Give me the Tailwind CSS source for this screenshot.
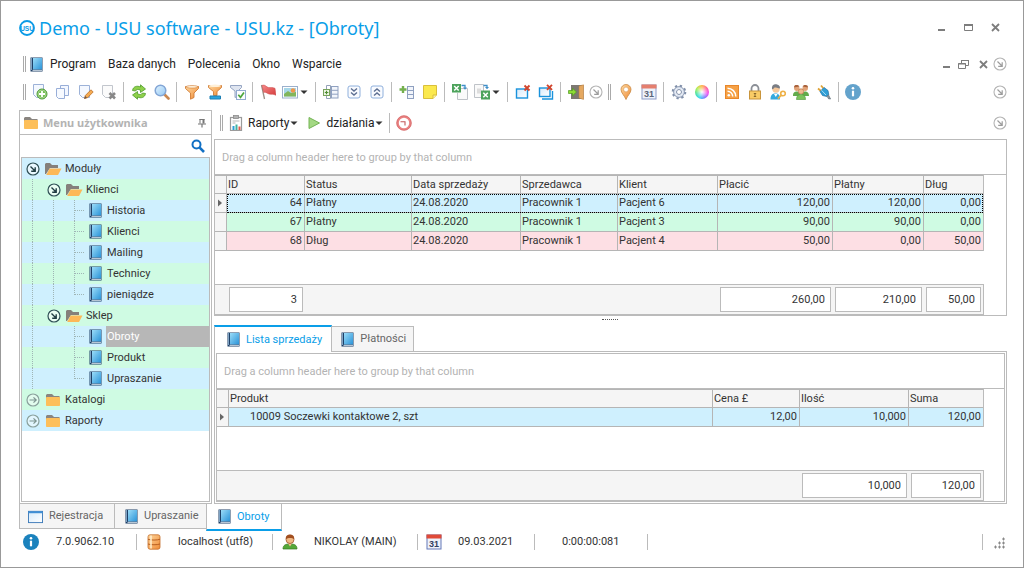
<!DOCTYPE html>
<html lang="pl">
<head>
<meta charset="utf-8">
<meta name="viewport" content="width=device-width, initial-scale=1">
<title>Demo - USU software - USU.kz - [Obroty]</title>
<script src="https://cdn.jsdelivr.net/npm/@tailwindcss/browser@4"></script>
</head>
<body class="bg-white font-[Roboto,'Noto_Sans',sans-serif] text-[11px] leading-4 text-[#333]">

<!-- Shared icon shapes -->
<svg class="absolute size-0" aria-hidden="true">
  <defs>
    <linearGradient id="gBook" x1="0" y1="0" x2="1" y2="1"><stop offset="0" stop-color="#9bdcf8"/><stop offset="1" stop-color="#2a93d8"/></linearGradient>
    <linearGradient id="gOrange" x1="0" y1="0" x2="1" y2="1"><stop offset="0" stop-color="#ffd9a0"/><stop offset="1" stop-color="#ef8a35"/></linearGradient>
    <linearGradient id="gLens" x1="0" y1="0" x2="1" y2="1"><stop offset="0" stop-color="#e2f3ff"/><stop offset="1" stop-color="#93c8f3"/></linearGradient>
    <linearGradient id="gRed" x1="0" y1="0" x2="1" y2="1"><stop offset="0" stop-color="#f58a8a"/><stop offset="1" stop-color="#d63c3c"/></linearGradient>
    <linearGradient id="gWin" x1="0" y1="0" x2="1" y2="1"><stop offset="0" stop-color="#d5eafb"/><stop offset="1" stop-color="#fff"/></linearGradient>
  </defs>
  <symbol id="book" viewBox="0 0 13 15"><rect x=".5" y=".5" width="12" height="14" fill="#1d3f66"/><rect x="1" y="1" width="1" height="12" fill="#7fa3c4"/><rect x="3" y="1" width="9" height="11.5" fill="url(#gBook)"/><path d="M2.500 13.300H12" stroke="#dfe9f2" stroke-width="1"/></symbol>
  <symbol id="folder" viewBox="0 0 16 14"><path d="M1 3V2l1-1h5l2 2h5.500v3H1z" fill="#8a8580"/><rect x="1" y="4" width="14" height="9" rx=".8" fill="#fdbf5a"/></symbol>
  <symbol id="folderOpen" viewBox="0 0 17 14"><path d="M0 2l1-1h4l2 2h6v3H5L1 12H0z" fill="#85807b"/><path d="M4.600 6.500H16.500L13 13H1.200z" fill="#fdb858"/></symbol>
  <symbol id="openNode" viewBox="0 0 14 14"><circle cx="7" cy="7" r="6" fill="#fff" fill-opacity=".55" stroke="#2f4f55" stroke-width="1.200"/><path d="M4.500 4.500l4.500 4.500M9.200 5.300v4H5.200" fill="none" stroke="#203c42" stroke-width="1.400"/></symbol>
  <symbol id="closedNode" viewBox="0 0 14 14"><circle cx="7" cy="7" r="6" fill="#fff" fill-opacity=".4" stroke="#8aa09c" stroke-width="1.200"/><path d="M3.500 7h6.500M7.500 4.300L10.200 7 7.500 9.700" fill="none" stroke="#7d9490" stroke-width="1.200"/></symbol>
  <symbol id="more" viewBox="0 0 14 14"><circle cx="7" cy="7" r="6" fill="none" stroke="#b4b4b4" stroke-width="1.100"/><path d="M4.500 4.500l4.500 4.500M9.200 5.300v4H5.200" fill="none" stroke="#9c9c9c" stroke-width="1.200"/></symbol>
  <symbol id="gv" viewBox="0 0 21 21"><path d="M10.500 0V21" stroke="#9fb5b5" stroke-dasharray="1 1"/></symbol>
  <symbol id="gt" viewBox="0 0 21 21"><path d="M10.500 0V21M11 10.500H20" stroke="#9fb5b5" stroke-dasharray="1 1"/></symbol>
  <symbol id="ge" viewBox="0 0 21 21"><path d="M10.500 0V11M11 10.500H20" stroke="#9fb5b5" stroke-dasharray="1 1"/></symbol>
  <symbol id="new" viewBox="0 0 16 16"><path d="M1.500 .5h10v13h-7l-3-3z" fill="#f4f8ff" stroke="#9db2d8"/><circle cx="10" cy="10" r="5" fill="#74bd54" stroke="#4f9a3a"/><circle cx="10" cy="10" r="4" fill="none" stroke="#b9e0a2" stroke-width=".7"/><path d="M10 7v6M7 10h6" stroke="#fff" stroke-width="1.800"/></symbol>
  <symbol id="copy" viewBox="0 0 16 16"><path d="M5.500 1.500h8v10h-8z" fill="#f3f7ff" stroke="#98aed8"/><path d="M1.500 4.500h8v10h-6l-2-2z" fill="#f7faff" stroke="#98aed8"/></symbol>
  <symbol id="edit" viewBox="0 0 16 16"><path d="M1.500 1.500h10v12h-7l-3-3z" fill="#f4f8ff" stroke="#9db2d8"/><path d="M6.500 14.500l.8-3L13 5.800l2.200 2.200-5.700 5.700z" fill="#f5ab52" stroke="#b96f2a" stroke-width=".8"/><path d="M6.200 15l1-3 1.800 1.800z" fill="#6c5848"/></symbol>
  <symbol id="del" viewBox="0 0 16 16"><path d="M1.500 1.500h10v12h-7l-3-3z" fill="#fbfbfb" stroke="#c2c6cd"/><path d="M8.500 9l5.500 5.500M14 9l-5.500 5.500" stroke="#888" stroke-width="2.600"/></symbol>
  <symbol id="refresh" viewBox="0 0 16 16"><path d="M1.500 6.500C2 2.500 6 1.300 9.500 3V.8L14.500 5 9.500 8.500V6.200C7 5 5.300 5.300 4.500 7z" fill="#8ed04a" stroke="#4d9a2a" stroke-width=".8"/><path d="M14.500 9.500c-.5 4-4.500 5.200-8 3.500v2.200L1.500 11l5-3.500v2.300c2.500 1.200 4.200.9 5-.8z" fill="#8ed04a" stroke="#4d9a2a" stroke-width=".8"/></symbol>
  <symbol id="find" viewBox="0 0 16 16"><path d="M10.500 10.500l4 4" stroke="#c98852" stroke-width="2.600" stroke-linecap="round"/><circle cx="6.500" cy="6.500" r="5.300" fill="url(#gLens)" stroke="#83a6d6" stroke-width="1.500"/></symbol>
  <symbol id="funnel" viewBox="0 0 16 16"><path d="M1.500 2.500h13v2L10 9v4.500l-3.500 1.700V9L1.500 4.500z" fill="url(#gOrange)" stroke="#d07c35" stroke-width=".9"/><ellipse cx="8" cy="2.800" rx="6" ry="1.300" fill="#fff0d8" stroke="#d07c35" stroke-width=".6"/></symbol>
  <symbol id="funnelBar" viewBox="0 0 16 16"><path d="M1.500 1.500h13v2L10 7.500v4H6.500v-4L1.500 3.500z" fill="url(#gOrange)" stroke="#d07c35" stroke-width=".9"/><ellipse cx="8" cy="1.800" rx="6" ry="1.200" fill="#fff0d8"/><path d="M3 12h10.500v3H3z" fill="#28a4dd" stroke="#1c7fb4"/></symbol>
  <symbol id="funnelOk" viewBox="0 0 16 16"><path d="M.5 1.500h11v2L8 7v5l-3 1.500V7L.5 3.500z" fill="#dfe5f0" stroke="#8b9cbc" stroke-width=".9"/><rect x="6.500" y="6.500" width="9" height="9" fill="#fbfdff" stroke="#93abd0"/><path d="M8.300 10.800l2.200 2.500 3.500-4.800" fill="none" stroke="#4da63c" stroke-width="1.700"/></symbol>
  <symbol id="flag" viewBox="0 0 16 16"><path d="M1.500 1l3 14" stroke="#9c8f86" stroke-width="1.300"/><path d="M2 1.500c3-1.500 4 1.500 6.500 2s3-.8 6.500.8l1 7c-3-1.700-4.500-.5-7-1.300S5.700 7.500 3.700 8.500z" fill="url(#gRed)" stroke="#c94a4a" stroke-width=".5"/></symbol>
  <symbol id="image" viewBox="0 0 16 16"><rect x=".5" y="2.500" width="15" height="11.500" fill="#fff" stroke="#9bb0cc"/><rect x="2" y="4" width="12" height="8.500" fill="#a7d7e8"/><path d="M2 10l4-3 3 2 5-1v4.500H2z" fill="#82b65c"/><circle cx="11" cy="6.500" r="2.300" fill="#f0974a"/></symbol>
  <symbol id="caret" viewBox="0 0 8 8"><path d="M.5 2.500h7L4 6z" fill="#333"/></symbol>
  <symbol id="expandCols" viewBox="0 0 16 16"><path d="M3.500 6V1.500h4v13h-4V11" fill="none" stroke="#93a1b8"/><rect x="8.500" y="2.500" width="6.500" height="11.500" fill="#f2f5fb" stroke="#8fa0c0"/><path d="M8.500 6.300H15M8.500 10.200H15" stroke="#8fa0c0"/><rect x=".5" y="5.500" width="6" height="6" fill="#eef6e6" stroke="#78a35e"/><path d="M3.500 6.800v3.500M1.800 8.500h3.500" stroke="#4f8d32" stroke-width="1.200"/></symbol>
  <symbol id="chevDown" viewBox="0 0 16 16"><rect x="2" y="2" width="12" height="12" rx="2" fill="#f9fbff" stroke="#8fb0dc"/><path d="M5 4.500l3 2.500 3-2.500M5 8.500l3 2.500 3-2.500" fill="none" stroke="#5d6f92" stroke-width="1.400"/></symbol>
  <symbol id="chevUp" viewBox="0 0 16 16"><rect x="2" y="2" width="12" height="12" rx="2" fill="#f9fbff" stroke="#8fb0dc"/><path d="M5 7.500L8 5l3 2.500M5 11.500L8 9l3 2.500" fill="none" stroke="#5d6f92" stroke-width="1.400"/></symbol>
  <symbol id="addCol" viewBox="0 0 16 16"><path d="M4 2v7M.5 5.500h7" stroke="#74b04e" stroke-width="2.400"/><rect x="8.500" y="2.500" width="6" height="12" fill="#f2f5fb" stroke="#8fa0c0"/><path d="M8.500 6.500h6M8.500 10.500h6" stroke="#8fa0c0"/></symbol>
  <symbol id="note" viewBox="0 0 16 16"><path d="M1.500 1.500h13v9.500l-3.500 3.500h-9.500z" fill="#fbe94e" stroke="#d9bf3c"/><path d="M14.500 11H11v3.500" fill="#fff6a5" stroke="#d9bf3c"/></symbol>
  <symbol id="xlsIn" viewBox="0 0 16 16"><path d="M9 4.500H15.500V15.500H5.500V9" fill="#fafafa" stroke="#bfc3c8"/><rect x="0" y="0" width="9" height="8.500" fill="#4da35c"/><path d="M2.200 2l4.500 4.500M6.700 2L2.200 6.500" stroke="#fff" stroke-width="1.500"/><path d="M9.500 1.500H13V4" fill="none" stroke="#3f8fc9" stroke-width="1.300"/><path d="M11 3.500h4l-2 2.300z" fill="#3f8fc9"/></symbol>
  <symbol id="xlsOut" viewBox="0 0 16 16"><path d="M.5.500h9v13h-9z" fill="#fafafa" stroke="#bfc3c8"/><path d="M3 4.500h4v5H3z" fill="#ddd"/><rect x="7" y="6.500" width="9" height="9" fill="#4da35c"/><path d="M9.300 8.800l4.500 4.500M13.800 8.800l-4.500 4.500" stroke="#fff" stroke-width="1.500"/><path d="M9.500 1.500H13V4" fill="none" stroke="#3f8fc9" stroke-width="1.300"/><path d="M11 3h4l-2 2.300z" fill="#3f8fc9"/></symbol>
  <symbol id="winX" viewBox="0 0 16 16"><rect x="1.500" y="5" width="11" height="9" fill="url(#gWin)" stroke="#1992dc" stroke-width="1.400"/><path d="M9.500 1.500l5 5M14.500 1.500l-5 5" stroke="#d2452d" stroke-width="1.900"/></symbol>
  <symbol id="winsX" viewBox="0 0 16 16"><path d="M4 15h10.500V7" fill="none" stroke="#1992dc" stroke-width="1.400"/><rect x="1.500" y="4" width="10.500" height="8.500" fill="url(#gWin)" stroke="#1992dc" stroke-width="1.400"/><path d="M9 .8l5 5M14 .8l-5 5" stroke="#d2452d" stroke-width="1.900"/></symbol>
  <symbol id="door" viewBox="0 0 16 16"><path d="M3 1h12.500v14H3z" fill="#7d7872"/><path d="M11 2l4.500-1.200v14.700L11 14z" fill="#e5a860" stroke="#b97f3e" stroke-width=".5"/><path d="M.5 6.500h4V4.200L8.500 8l-4 3.800V9.500h-4z" fill="#8ddb35" stroke="#4f9a1e" stroke-width=".7"/></symbol>
  <symbol id="pin" viewBox="0 0 16 16"><path d="M8 15.500C6.500 11.500 3 9 3 5.500a5 5 0 0110 0C13 9 9.500 11.500 8 15.500z" fill="url(#gOrange)" stroke="#c98a45" stroke-width=".8"/><circle cx="8" cy="5.500" r="2.400" fill="#fff" stroke="#d59a58" stroke-width=".6"/></symbol>
  <symbol id="gear" viewBox="0 0 16 16"><circle cx="8" cy="8" r="6.300" fill="none" stroke="#8190aa" stroke-width="2" stroke-dasharray="2.300 2.650"/><circle cx="8" cy="8" r="4.300" fill="#fff" stroke="#dfe6f2" stroke-width="2"/><circle cx="8" cy="8" r="5.400" fill="none" stroke="#8190aa" stroke-width=".9"/><circle cx="8" cy="8" r="2.500" fill="#fff" stroke="#8190aa"/></symbol>
  <symbol id="rss" viewBox="0 0 16 16"><rect x="1.500" y="1.500" width="13" height="13" fill="#f6a145" stroke="#e8872a"/><circle cx="4.800" cy="11.300" r="1.300" fill="#fff"/><path d="M3.500 7.300a5.200 5.200 0 015.200 5.200M3.500 4.200a8.300 8.300 0 018.300 8.300" fill="none" stroke="#fff" stroke-width="1.500"/></symbol>
  <symbol id="lock" viewBox="0 0 16 16"><path d="M4.500 8V4.500a3.500 3.500 0 017 0V8" fill="none" stroke="#8b8f96" stroke-width="1.800"/><rect x="2.500" y="7" width="11" height="8" fill="#f9cc66" stroke="#c9953c"/><path d="M8 9.500v3M6.800 9.500h2.400M6.800 12.500h2.400" stroke="#8a6a2e"/></symbol>
  <symbol id="userKey" viewBox="0 0 16 16"><path d="M.5 15.500c0-5 2-6 5-6s4.500 1.500 4.500 6z" fill="#35a9dd"/><path d="M4 10l1.800 3L7.500 10z" fill="#fff"/><circle cx="6" cy="5" r="3.700" fill="#f6c89a"/><path d="M2 5C1.500.5 5 0 7 .5s3.500 2 2.800 4C8 4 6 3.500 4.500 3.500 3.500 5 2.800 5.500 2 5z" fill="#7a7d84"/><circle cx="13" cy="9.500" r="2.300" fill="none" stroke="#eeb045" stroke-width="1.600"/><path d="M11.500 11l-3.500 3.700" stroke="#eeb045" stroke-width="1.700"/></symbol>
  <symbol id="users" viewBox="0 0 16 16"><circle cx="3.800" cy="4.300" r="2.700" fill="#e2a377"/><circle cx="12.200" cy="4.300" r="2.700" fill="#e2a377"/><path d="M1 3.500C1 1 3 1 4 1s2 .5 2.400 1.500zM15 3.500C15 1 13 1 12 1s-2 .5-2.400 1.500z" fill="#a8623c"/><path d="M0 12c0-3.500 1.500-4.500 4-4.500S7 9 7 12zM9 12c0-3 1-4.500 3-4.500s4 1 4 4.500z" fill="#62ab4c"/><circle cx="8" cy="7.500" r="2.700" fill="#f0bc90" stroke="#b5744b" stroke-width=".7"/><path d="M3.500 15.500c0-3.500 1.500-5 4.500-5s4.500 1.500 4.500 5z" fill="#7cc35d" stroke="#4d9438" stroke-width=".6"/></symbol>
  <symbol id="plug" viewBox="0 0 16 16"><path d="M2 4.500l3 2.500M5 1.500l2.500 3" stroke="#dfa338" stroke-width="1.800"/><path d="M4 7.500L8 3.500l4 3 .8 4.300-2 1.700-4.300-1z" fill="#2f9fd6" stroke="#1b6fa3" stroke-width=".7"/><path d="M5.500 6.300l4.500 4.700" stroke="#a8dcf5"/><path d="M10.500 12.500l2-1.500 2 4-2.500-.5" fill="#8a97a0" stroke="#66747e" stroke-width=".8"/></symbol>
  <symbol id="info" viewBox="0 0 16 16"><circle cx="8" cy="8" r="8" fill="currentColor"/><circle cx="8" cy="4.300" r="1.300" fill="#fff"/><path d="M8 6.700v5.600" fill="none" stroke="#fff" stroke-width="2.200"/></symbol>
  <symbol id="report" viewBox="0 0 16 16"><rect x="2.500" y="2.500" width="11" height="13" fill="#fff" stroke="#9b9b9b" stroke-width="1.200"/><rect x="5.500" y=".5" width="5" height="3" fill="#b3b3b3" stroke="#8c8c8c" stroke-width=".8"/><path d="M4.500 6h7M4.500 8h3" stroke="#b5b5b5"/><path d="M5.500 15v-4" stroke="#2f9fd6" stroke-width="2"/><path d="M8.500 15V9.500" stroke="#41b3a0" stroke-width="2"/><path d="M11.500 15v-3.500" stroke="#e05a4c" stroke-width="2"/></symbol>
  <symbol id="play" viewBox="0 0 16 16"><path d="M3 2.500L13.500 8 3 13.500z" fill="#a3d883" stroke="#74b455"/></symbol>
  <symbol id="clock" viewBox="0 0 16 16"><circle cx="8" cy="8" r="6.400" fill="#fff" stroke="#e98282" stroke-width="2.400"/><circle cx="8" cy="8" r="7.300" fill="none" stroke="#cf6060" stroke-width=".6"/><path d="M4.500 6.800H9V10.500" fill="none" stroke="#c25a5a" stroke-width="1.100"/></symbol>
  <symbol id="thumbtack" viewBox="0 0 10 10"><path d="M2.500 1.500h5M3 1v4.500" stroke="#777"/><path d="M5.500 1h2v4.500h-2z" fill="#777"/><path d="M1 6h8M5 6v3.500" stroke="#777" stroke-width="1.200"/></symbol>
  <symbol id="glass" viewBox="0 0 14 14"><circle cx="5.500" cy="5.500" r="4" fill="none" stroke="#1170c4" stroke-width="2"/><path d="M8.700 8.700L13 13" stroke="#1170c4" stroke-width="2.600"/></symbol>
  <symbol id="win" viewBox="0 0 16 16"><rect x=".5" y="2.500" width="15" height="12" fill="url(#gWin)" stroke="#3d7ab8"/><path d="M.5 3.500h15" stroke="#3f8fd6" stroke-width="2"/></symbol>
  <symbol id="db" viewBox="0 0 16 16"><rect x="2" y=".8" width="12" height="14.400" rx="2" fill="url(#gOrange)" stroke="#c46d2a" stroke-width=".8"/><path d="M2 5.300c3 1 9 1 12 0M2 10c3 1 9 1 12 0" fill="none" stroke="#b85f20"/><path d="M5 1.500v13" stroke="#fff0d0" stroke-width="1.500"/></symbol>
  <symbol id="user" viewBox="0 0 16 16"><path d="M1 15c0-4 2.500-5 7-5s7 1 7 5z" fill="#55a838" stroke="#35781f" stroke-width=".7"/><path d="M6 9.500h4L8 12.500z" fill="#f2c08e"/><circle cx="8" cy="5.500" r="4" fill="#f0b884" stroke="#9c5529" stroke-width=".8"/><path d="M3.800 5C3.500 1.500 6 .5 8 .5s4.500 1 4.200 4.500C10 3.500 6 3.500 3.800 5z" fill="#a24f1f"/></symbol>
  <symbol id="rowMark" viewBox="0 0 6 8"><path d="M1 .5L5 4 1 7.500z" fill="#666"/></symbol>
</svg>

<div class="flex min-h-screen flex-col border border-[#999] pr-4 pb-[14px] pl-[18px]">

  <!-- Title bar -->
  <header class="flex h-[53px] shrink-0 items-center">
    <svg class="size-4 shrink-0" viewBox="0 0 16 16" aria-hidden="true"><circle cx="8" cy="8" r="7" fill="#fff" stroke="#0a9ae6" stroke-width="1.800"/><text x="8" y="10.500" text-anchor="middle" font-family="Liberation Sans, sans-serif" font-weight="700" font-size="6.500" fill="#0a9ae6">USU</text></svg>
    <h1 class="ml-1 grow font-['Noto_Sans',sans-serif] text-[18px] leading-6 text-[#0a9ee8]">Demo - USU software - USU.kz - [Obroty]</h1>
    <div class="mr-[5px] flex gap-[14px] text-[#7d7d7d]">
      <button aria-label="Minimalizuj" class="size-[13px]"><svg viewBox="0 0 13 13"><path d="M3 9h7" stroke="currentColor" stroke-width="2"/></svg></button>
      <button aria-label="Maksymalizuj" class="size-[13px]"><svg viewBox="0 0 13 13"><path d="M2.500 3.500h8v6h-8z" fill="none" stroke="currentColor"/><path d="M2 4h9" stroke="currentColor" stroke-width="2"/></svg></button>
      <button aria-label="Zamknij" class="size-[13px]"><svg viewBox="0 0 13 13"><path d="M3 3l7 7M10 3l-7 7" stroke="currentColor" stroke-width="1.800"/></svg></button>
    </div>
  </header>

  <!-- Menu bar -->
  <nav class="flex h-5 shrink-0 items-center text-[12px] text-[#222]" aria-label="Menu">
    <span class="ml-1 h-4 w-[3px] border-x border-[#aaa]"></span>
    <svg class="ml-1 h-[15px] w-[13px]"><use href="#book"/></svg>
    <button class="ml-[7px]">Program</button>
    <button class="ml-3">Baza danych</button>
    <button class="ml-3">Polecenia</button>
    <button class="ml-3">Okno</button>
    <button class="ml-3 grow text-left">Wsparcie</button>
    <div class="flex items-center text-[#7d7d7d]">
      <button aria-label="Minimalizuj okno" class="mr-1 size-[13px]"><svg viewBox="0 0 13 13"><path d="M3 9h7" stroke="currentColor" stroke-width="2"/></svg></button>
      <button aria-label="Przywróć okno" class="mr-[7px] size-[13px]"><svg viewBox="0 0 13 13"><path d="M4.500 5V2.500h7v5H9M4 2.500h8" fill="none" stroke="currentColor"/><path d="M1.500 5.500h7v5h-7zM1 6h8" fill="none" stroke="currentColor"/></svg></button>
      <button aria-label="Zamknij okno" class="mr-[3px] size-[13px]"><svg viewBox="0 0 13 13"><path d="M3 3l7 7M10 3l-7 7" stroke="currentColor" stroke-width="1.800"/></svg></button>
      <button aria-label="Więcej" class="size-[14px]"><svg class="size-full"><use href="#more"/></svg></button>
    </div>
  </nav>

  <!-- Main toolbar -->
  <div role="toolbar" aria-label="Pasek narzędzi" class="flex h-9 shrink-0 items-center">
    <span class="mr-[2px] ml-1 h-4 w-[3px] border-x border-[#aaa]"></span>
    <button aria-label="Dodaj" class="flex w-[23px] justify-center"><svg class="size-4"><use href="#new"/></svg></button>
    <button aria-label="Kopiuj" class="flex w-[23px] justify-center"><svg class="size-4"><use href="#copy"/></svg></button>
    <button aria-label="Edytuj" class="flex w-[23px] justify-center"><svg class="size-4"><use href="#edit"/></svg></button>
    <button aria-label="Usuń" class="flex w-[23px] justify-center"><svg class="size-4"><use href="#del"/></svg></button>
    <span class="mx-[3px] h-5 w-px bg-[#bbb]"></span>
    <button aria-label="Odśwież" class="flex w-[23px] justify-center"><svg class="size-4"><use href="#refresh"/></svg></button>
    <button aria-label="Szukaj" class="flex w-[23px] justify-center"><svg class="size-4"><use href="#find"/></svg></button>
    <span class="mx-[3px] h-5 w-px bg-[#bbb]"></span>
    <button aria-label="Filtr" class="flex w-[23px] justify-center"><svg class="size-4"><use href="#funnel"/></svg></button>
    <button aria-label="Wiersz filtra" class="flex w-[23px] justify-center"><svg class="size-4"><use href="#funnelBar"/></svg></button>
    <button aria-label="Filtr aktywny" class="flex w-[23px] justify-center"><svg class="size-4"><use href="#funnelOk"/></svg></button>
    <span class="mx-[3px] h-5 w-px bg-[#bbb]"></span>
    <button aria-label="Flaga" class="flex w-[23px] justify-center"><svg class="size-4"><use href="#flag"/></svg></button>
    <button aria-label="Obraz" class="flex w-[33px] items-center pl-[3px]"><svg class="size-4"><use href="#image"/></svg><svg class="ml-[2px] size-2"><use href="#caret"/></svg></button>
    <span class="mx-[3px] h-5 w-px bg-[#bbb]"></span>
    <button aria-label="Kolumny" class="flex w-[23px] justify-center"><svg class="size-4"><use href="#expandCols"/></svg></button>
    <button aria-label="Rozwiń" class="flex w-[23px] justify-center"><svg class="size-4"><use href="#chevDown"/></svg></button>
    <button aria-label="Zwiń" class="flex w-[23px] justify-center"><svg class="size-4"><use href="#chevUp"/></svg></button>
    <span class="mx-[3px] h-5 w-px bg-[#bbb]"></span>
    <button aria-label="Dodaj kolumnę" class="flex w-[23px] justify-center"><svg class="size-4"><use href="#addCol"/></svg></button>
    <button aria-label="Notatka" class="flex w-[23px] justify-center"><svg class="size-4"><use href="#note"/></svg></button>
    <span class="mx-[3px] h-5 w-px bg-[#bbb]"></span>
    <button aria-label="Import" class="flex w-[23px] justify-center"><svg class="size-4"><use href="#xlsIn"/></svg></button>
    <button aria-label="Eksport" class="flex w-[33px] items-center pl-[3px]"><svg class="size-4"><use href="#xlsOut"/></svg><svg class="ml-[2px] size-2"><use href="#caret"/></svg></button>
    <span class="mx-[3px] h-5 w-px bg-[#bbb]"></span>
    <button aria-label="Zamknij kartę" class="flex w-[23px] justify-center"><svg class="size-4"><use href="#winX"/></svg></button>
    <button aria-label="Zamknij wszystkie" class="flex w-[23px] justify-center"><svg class="size-4"><use href="#winsX"/></svg></button>
    <span class="mx-[3px] h-5 w-px bg-[#bbb]"></span>
    <button aria-label="Wyjście" class="flex w-[23px] justify-center"><svg class="size-4"><use href="#door"/></svg></button>
    <button aria-label="Więcej" class="flex w-[18px] justify-center"><svg class="size-[14px]"><use href="#more"/></svg></button>
    <span class="mx-[3px] h-4 w-[3px] border-x border-[#aaa]"></span>
    <button aria-label="Mapa" class="flex w-[23px] justify-center"><svg class="size-4"><use href="#pin"/></svg></button>
    <button aria-label="Kalendarz" class="flex w-[23px] justify-center"><svg class="size-4" viewBox="0 0 16 16"><rect x="1" y="1" width="14" height="14" fill="#eef2fa" stroke="#8c9cc8"/><rect x=".5" y=".5" width="15" height="4" fill="#e57f6e"/><text x="8" y="13" text-anchor="middle" font-family="Liberation Sans, sans-serif" font-weight="700" font-size="9" fill="#5b6578">31</text></svg></button>
    <span class="mx-[3px] h-5 w-px bg-[#bbb]"></span>
    <button aria-label="Ustawienia" class="flex w-[23px] justify-center"><svg class="size-4"><use href="#gear"/></svg></button>
    <button aria-label="Kolory" class="flex w-[23px] justify-center"><span class="size-[14px] rounded-full bg-[radial-gradient(circle,#fff_0%,transparent_65%),conic-gradient(#ffb347,#ff5d9e,#f04ef0,#7d7bff,#35d8f0,#4be39a,#b5ee4f,#ffb347)]"></span></button>
    <span class="mx-[3px] h-5 w-px bg-[#bbb]"></span>
    <button aria-label="RSS" class="flex w-[23px] justify-center"><svg class="size-4"><use href="#rss"/></svg></button>
    <button aria-label="Blokada" class="flex w-[23px] justify-center"><svg class="size-4"><use href="#lock"/></svg></button>
    <button aria-label="Prawa dostępu" class="flex w-[23px] justify-center"><svg class="size-4"><use href="#userKey"/></svg></button>
    <button aria-label="Użytkownicy" class="flex w-[23px] justify-center"><svg class="size-4"><use href="#users"/></svg></button>
    <button aria-label="Połączenie" class="flex w-[23px] justify-center"><svg class="size-4"><use href="#plug"/></svg></button>
    <span class="mx-[3px] h-5 w-px bg-[#bbb]"></span>
    <button aria-label="Informacje" class="flex w-[21px] justify-center"><svg class="size-4 text-[#64a3cc]"><use href="#info"/></svg></button>
    <button aria-label="Więcej" class="ml-auto size-[14px]"><svg class="size-full"><use href="#more"/></svg></button>
  </div>

  <div class="flex grow gap-[2px]">

    <!-- User menu -->
    <aside class="flex w-[193px] shrink-0 flex-col border border-[#bbb]">
      <div class="flex h-6 shrink-0 items-center border-b border-[#bbb] pr-1 pl-[3px]">
        <svg class="h-[14px] w-4"><use href="#folder"/></svg>
        <h2 class="ml-1 grow font-['Noto_Sans',sans-serif] text-[11px] font-bold text-[#b3b3b3]">Menu użytkownika</h2>
        <button aria-label="Przypnij" class="size-[10px]"><svg class="size-full"><use href="#thumbtack"/></svg></button>
      </div>
      <label class="flex h-[22px] shrink-0 items-center pr-[6px]">
        <input type="text" aria-label="Szukaj w menu" class="min-w-0 grow outline-none">
        <svg class="size-[14px]"><use href="#glass"/></svg>
      </label>
      <div class="mx-px mb-px grow border border-[#bbb]">
        <ul role="tree" class="[&>li]:flex [&>li]:h-[21px] [&>li]:items-center [&>li:nth-child(odd)]:bg-[#cff0fe] [&>li:nth-child(even)]:bg-[#cffbe3]">
          <li role="treeitem" aria-selected="false"><span class="flex w-[21px] justify-center"><svg class="size-[14px]"><use href="#openNode"/></svg></span><svg class="mr-[3px] ml-[2px] h-[14px] w-[17px]"><use href="#folderOpen"/></svg>Moduły</li>
          <li role="treeitem" aria-selected="false"><svg class="size-[21px]"><use href="#gv"/></svg><span class="flex w-[21px] justify-center"><svg class="size-[14px]"><use href="#openNode"/></svg></span><svg class="mr-[3px] ml-[2px] h-[14px] w-[17px]"><use href="#folderOpen"/></svg>Klienci</li>
          <li role="treeitem" aria-selected="false"><svg class="size-[21px]"><use href="#gv"/></svg><svg class="size-[21px]"><use href="#gv"/></svg><svg class="size-[21px]"><use href="#gt"/></svg><svg class="mr-[5px] ml-1 h-[15px] w-[13px]"><use href="#book"/></svg>Historia</li>
          <li role="treeitem" aria-selected="false"><svg class="size-[21px]"><use href="#gv"/></svg><svg class="size-[21px]"><use href="#gv"/></svg><svg class="size-[21px]"><use href="#gt"/></svg><svg class="mr-[5px] ml-1 h-[15px] w-[13px]"><use href="#book"/></svg>Klienci</li>
          <li role="treeitem" aria-selected="false"><svg class="size-[21px]"><use href="#gv"/></svg><svg class="size-[21px]"><use href="#gv"/></svg><svg class="size-[21px]"><use href="#gt"/></svg><svg class="mr-[5px] ml-1 h-[15px] w-[13px]"><use href="#book"/></svg>Mailing</li>
          <li role="treeitem" aria-selected="false"><svg class="size-[21px]"><use href="#gv"/></svg><svg class="size-[21px]"><use href="#gv"/></svg><svg class="size-[21px]"><use href="#gt"/></svg><svg class="mr-[5px] ml-1 h-[15px] w-[13px]"><use href="#book"/></svg>Technicy</li>
          <li role="treeitem" aria-selected="false"><svg class="size-[21px]"><use href="#gv"/></svg><svg class="size-[21px]"><use href="#gv"/></svg><svg class="size-[21px]"><use href="#ge"/></svg><svg class="mr-[5px] ml-1 h-[15px] w-[13px]"><use href="#book"/></svg>pieniądze</li>
          <li role="treeitem" aria-selected="false"><svg class="size-[21px]"><use href="#gv"/></svg><span class="flex w-[21px] justify-center"><svg class="size-[14px]"><use href="#openNode"/></svg></span><svg class="mr-[3px] ml-[2px] h-[14px] w-[17px]"><use href="#folderOpen"/></svg>Sklep</li>
          <li role="treeitem" aria-selected="true"><svg class="size-[21px]"><use href="#gv"/></svg><span class="size-[21px]"></span><svg class="size-[21px]"><use href="#gt"/></svg><svg class="mr-1 ml-1 h-[15px] w-[13px]"><use href="#book"/></svg><span class="flex h-full grow items-center bg-[#b7b7b7] pl-px text-white">Obroty</span></li>
          <li role="treeitem" aria-selected="false"><svg class="size-[21px]"><use href="#gv"/></svg><span class="size-[21px]"></span><svg class="size-[21px]"><use href="#gt"/></svg><svg class="mr-[5px] ml-1 h-[15px] w-[13px]"><use href="#book"/></svg>Produkt</li>
          <li role="treeitem" aria-selected="false"><svg class="size-[21px]"><use href="#gv"/></svg><span class="size-[21px]"></span><svg class="size-[21px]"><use href="#ge"/></svg><svg class="mr-[5px] ml-1 h-[15px] w-[13px]"><use href="#book"/></svg>Upraszanie</li>
          <li role="treeitem" aria-selected="false"><span class="flex w-[21px] justify-center"><svg class="size-[14px]"><use href="#closedNode"/></svg></span><svg class="mr-1 ml-[2px] h-[14px] w-4"><use href="#folder"/></svg>Katalogi</li>
          <li role="treeitem" aria-selected="false"><span class="flex w-[21px] justify-center"><svg class="size-[14px]"><use href="#closedNode"/></svg></span><svg class="mr-1 ml-[2px] h-[14px] w-4"><use href="#folder"/></svg>Raporty</li>
        </ul>
      </div>
    </aside>

    <main class="flex min-w-0 grow flex-col">
      <div role="toolbar" aria-label="Obroty" class="mb-[3px] flex h-[26px] shrink-0 items-center text-[12px] text-[#222]">
        <span class="ml-[6px] h-4 w-[3px] border-x border-[#aaa]"></span>
        <button class="ml-[5px] flex items-center"><svg class="mr-1 size-4"><use href="#report"/></svg>Raporty<svg class="ml-px size-2"><use href="#caret"/></svg></button>
        <button class="ml-2 flex items-center"><svg class="mr-1 size-4"><use href="#play"/></svg>działania<svg class="ml-px size-2"><use href="#caret"/></svg></button>
        <span class="mx-[6px] h-5 w-px bg-[#bbb]"></span>
        <button aria-label="Historia"><svg class="size-4"><use href="#clock"/></svg></button>
        <button aria-label="Więcej" class="ml-auto size-[14px]"><svg class="size-full"><use href="#more"/></svg></button>
      </div>

      <!-- Sales grid -->
      <section class="shrink-0 border border-[#bbb]" aria-label="Obroty">
        <p class="flex h-[35px] items-center border-b border-[#bbb] pt-px pl-[7px] text-[#b3b3b3]">Drag a column header here to group by that column</p>
        <div class="mr-[22px] border-r border-[#bbb]">
          <table class="w-full table-fixed border-separate border-spacing-0 [&_td]:h-[19px] [&_td]:border-r [&_td]:border-b [&_td]:border-[#b5b5b5] [&_td]:pr-[2px] [&_td]:pl-px [&_td]:leading-4 [&_th]:h-[19px] [&_th]:border-t [&_th]:border-r [&_th]:border-b [&_th]:border-[#b5b5b5] [&_th]:bg-[#f5f5f5] [&_th]:px-px [&_th]:text-left [&_th]:font-normal [&_tr>*:last-child]:border-r-0">
            <colgroup><col class="w-3"><col class="w-[78px]"><col class="w-[107px]"><col class="w-[109px]"><col class="w-[97px]"><col><col class="w-[115px]"><col class="w-[91px]"><col class="w-[59px]"></colgroup>
            <thead><tr><th></th><th>ID</th><th>Status</th><th>Data sprzedaży</th><th>Sprzedawca</th><th>Klient</th><th>Płacić</th><th>Płatny</th><th>Dług</th></tr></thead>
            <tbody>
              <tr class="relative bg-[#cff0fe]"><td class="bg-[#f5f5f5]"><svg class="mx-auto h-2 w-[6px]"><use href="#rowMark"/></svg><span class="pointer-events-none absolute inset-y-0 right-0 left-3 border border-dotted border-black"></span></td><td class="text-right">64</td><td>Płatny</td><td>24.08.2020</td><td>Pracownik 1</td><td>Pacjent 6</td><td class="text-right">120,00</td><td class="text-right">120,00</td><td class="text-right">0,00</td></tr>
              <tr class="bg-[#cffbe3]"><td class="bg-[#f5f5f5]"></td><td class="text-right">67</td><td>Płatny</td><td>24.08.2020</td><td>Pracownik 1</td><td>Pacjent 3</td><td class="text-right">90,00</td><td class="text-right">90,00</td><td class="text-right">0,00</td></tr>
              <tr class="bg-[#fddfe4]"><td class="bg-[#f5f5f5]"></td><td class="text-right">68</td><td>Dług</td><td>24.08.2020</td><td>Pracownik 1</td><td>Pacjent 4</td><td class="text-right">50,00</td><td class="text-right">0,00</td><td class="text-right">50,00</td></tr>
            </tbody>
          </table>
        </div>
        <div class="mt-[33px] mr-[22px] flex h-[31px] items-center border-t border-r border-b border-[#bbb] bg-[#f5f5f5] pr-[2px] text-right [&>output]:h-[25px] [&>output]:border [&>output]:border-[#bbb] [&>output]:bg-white [&>output]:px-[5px] [&>output]:leading-6">
          <output class="ml-[14px] w-[74px]">3</output>
          <output class="ml-auto w-[111px]">260,00</output>
          <output class="ml-1 w-[87px]">210,00</output>
          <output class="ml-1 w-[55px]">50,00</output>
        </div>
      </section>

      <div class="flex h-[9px] shrink-0 justify-center pt-[3px]"><span class="w-4 border-t border-dotted border-[#555]"></span></div>

      <!-- Details -->
      <div role="tablist" class="flex h-[26px] shrink-0 items-end">
        <button role="tab" aria-selected="true" class="z-10 -mb-px flex h-[27px] items-center border-t-2 border-r border-l border-t-[#0a9ee8] border-r-[#bbb] border-l-[#bbb] bg-white pr-[9px] pl-3 text-[#0a9ee8]"><svg class="mr-[6px] h-[15px] w-[13px]"><use href="#book"/></svg>Lista sprzedaży</button>
        <button role="tab" aria-selected="false" class="flex h-[25px] items-center border-t border-r border-[#bbb] bg-[#f5f5f5] pr-[7px] pl-[9px] text-[#666]"><svg class="mr-[6px] h-[15px] w-[13px]"><use href="#book"/></svg>Płatności</button>
      </div>
      <section class="flex grow border border-[#bbb] p-px" aria-label="Lista sprzedaży">
        <div class="flex min-w-0 grow flex-col border border-[#bbb]">
          <p class="flex h-[35px] shrink-0 items-center border-b border-[#bbb] pt-px pl-[7px] text-[#b3b3b3]">Drag a column header here to group by that column</p>
          <div class="mr-5 border-r border-[#bbb]">
            <table class="w-full table-fixed border-separate border-spacing-0 [&_td]:h-[19px] [&_td]:border-r [&_td]:border-b [&_td]:border-[#b5b5b5] [&_td]:pr-[2px] [&_td]:pl-px [&_td]:leading-4 [&_th]:h-[19px] [&_th]:border-t [&_th]:border-r [&_th]:border-b [&_th]:border-[#b5b5b5] [&_th]:bg-[#f5f5f5] [&_th]:px-px [&_th]:text-left [&_th]:font-normal [&_tr>*:last-child]:border-r-0">
              <colgroup><col class="w-3"><col><col class="w-[87px]"><col class="w-[109px]"><col class="w-[74px]"></colgroup>
              <thead><tr><th></th><th>Produkt</th><th>Cena £</th><th>Ilość</th><th>Suma</th></tr></thead>
              <tbody><tr class="bg-[#cff0fe]"><td class="bg-[#f5f5f5]"><svg class="mx-auto h-2 w-[6px]"><use href="#rowMark"/></svg></td><td><span class="pl-5">10009 Soczewki kontaktowe 2, szt</span></td><td class="text-right">12,00</td><td class="text-right">10,000</td><td class="text-right">120,00</td></tr></tbody>
            </table>
          </div>
          <div class="mt-auto mr-5 flex h-[31px] shrink-0 items-center border-t border-r border-b border-[#bbb] bg-[#f5f5f5] pr-[2px] text-right [&>output]:h-[25px] [&>output]:border [&>output]:border-[#bbb] [&>output]:bg-white [&>output]:px-[5px] [&>output]:leading-6">
            <output class="ml-auto w-[105px]">10,000</output>
            <output class="ml-1 w-[70px]">120,00</output>
          </div>
        </div>
      </section>
    </main>
  </div>

  <!-- Open windows -->
  <div role="tablist" class="flex h-[27px] shrink-0 items-start text-[#666]">
    <button role="tab" aria-selected="false" class="flex h-[25px] w-24 items-center border-x border-b border-[#bbb] bg-[#f5f5f5] pl-2"><svg class="mr-[6px] size-[15px]"><use href="#win"/></svg>Rejestracja</button>
    <button role="tab" aria-selected="false" class="flex h-[25px] w-[91px] items-center border-b border-[#bbb] bg-[#f5f5f5] pl-[10px]"><svg class="mr-[6px] h-[15px] w-[13px]"><use href="#book"/></svg>Upraszanie</button>
    <button role="tab" aria-selected="true" class="flex h-[27px] w-[76px] items-center border-r border-b-2 border-l border-r-[#bbb] border-b-[#0a9ee8] border-l-[#bbb] pl-[11px] text-[#0a9ee8]"><svg class="mr-[6px] h-[15px] w-[13px]"><use href="#book"/></svg>Obroty</button>
  </div>

  <!-- Status bar -->
  <footer class="flex h-[22px] shrink-0 items-center text-[#333]">
    <span class="flex h-4 w-[118px] items-center gap-[17px] border-r border-[#bbb] pl-1"><svg class="size-4 text-[#1b82bd]"><use href="#info"/></svg>7.0.9062.10</span>
    <span class="flex h-4 w-[136px] items-center gap-4 border-r border-[#bbb] pl-[9px]"><svg class="size-4"><use href="#db"/></svg>localhost (utf8)</span>
    <span class="flex h-4 w-[145px] items-center gap-4 border-r border-[#bbb] pl-[9px]"><svg class="size-4"><use href="#user"/></svg>NIKOLAY (MAIN)</span>
    <span class="flex h-4 w-[117px] items-center gap-4 border-r border-[#bbb] pl-2"><svg class="size-4" viewBox="0 0 16 16" aria-hidden="true"><rect x="1" y="1" width="14" height="14" fill="#eef2fa" stroke="#6478b8"/><rect x=".5" y=".5" width="15" height="4" fill="#e04a38"/><text x="8" y="13" text-anchor="middle" font-family="Liberation Sans, sans-serif" font-weight="700" font-size="9" fill="#34405e">31</text></svg>09.03.2021</span>
    <span class="flex h-4 w-[113px] items-center border-r border-[#bbb] pl-[27px]">0:00:00:081</span>
    <span class="ml-auto h-4 w-px bg-[#bbb]"></span>
    <svg class="mr-px ml-[10px] size-[13px]" viewBox="0 0 13 13" aria-hidden="true"><path d="M1 11h3M5 11h3M9 11h3M5 7h3M9 7h3M9 3h3M2.500 9.500v3M6.500 9.500v3M10.500 9.500v3M6.500 5.500v3M10.500 5.500v3M10.500 1.500v3" stroke="#888"/></svg>
  </footer>
</div>
</body>
</html>
